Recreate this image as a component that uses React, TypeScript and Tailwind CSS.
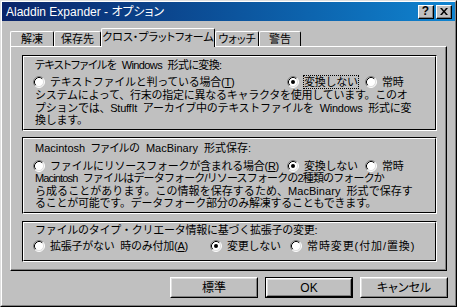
import React from 'react';

const font = "font-['Liberation_Sans','Noto_Sans_CJK_JP',sans-serif]";
const palt = "[font-feature-settings:'palt']";

const Radio: React.FC<{ checked?: boolean }> = ({ checked }) => (
  <svg width="12" height="12" viewBox="0 0 12 12" className="shrink-0">
    <circle cx="6" cy="6" r="5" fill="#fff" />
    <path d="M2.11 9.89A5.5 5.5 0 0 1 9.89 2.11" stroke="#808080" fill="none" />
    <path d="M9.89 2.11A5.5 5.5 0 0 1 2.11 9.89" stroke="#fff" fill="none" />
    <path d="M2.82 9.18A4.5 4.5 0 0 1 9.18 2.82" stroke="#000" fill="none" />
    <path d="M9.18 2.82A4.5 4.5 0 0 1 2.82 9.18" stroke="#dfdfdf" fill="none" />
    {checked && <circle cx="6" cy="6" r="2" fill="#000" />}
  </svg>
);

const Option: React.FC<{ checked?: boolean; focus?: boolean; className?: string; children: React.ReactNode }> = ({
  checked,
  focus,
  className = '',
  children,
}) => (
  <div className={`flex items-center gap-[5px] shrink-0 ${className}`}>
    <Radio checked={checked} />
    <span className={`whitespace-nowrap leading-[12px] ${focus ? 'outline outline-1 outline-dotted outline-black' : ''}`}>
      {children}
    </span>
  </div>
);

// etched frame, dark on top/left and white on bottom/right
const GroupBox: React.FC<{ className: string; children: React.ReactNode }> = ({ className, children }) => (
  <div className={`w-[415px] border border-t-black border-l-black border-r-white border-b-white ${className}`}>
    <div className="h-full border border-t-white border-l-white border-r-black border-b-black pl-[9px]">
      {children}
    </div>
  </div>
);

const Tab: React.FC<{ w: string; active?: boolean; children: React.ReactNode }> = ({ w, active, children }) => (
  <div
    className={`${w} flex justify-center border-l border-t border-white border-r border-r-black rounded-t-[2px] bg-[#c0c0c0] text-[11px] tracking-normal ${palt} ${
      active ? 'h-[19px] -mb-px relative z-10 pt-[2px]' : 'h-[15px] pt-[1px]'
    }`}
  >
    <span className="leading-[12px] whitespace-nowrap">{children}</span>
  </div>
);

const Button: React.FC<{ isDefault?: boolean; children: React.ReactNode }> = ({ isDefault, children }) => (
  <div className={`w-[88px] h-[21px] ${isDefault ? 'border border-black' : ''}`}>
    <div className="h-full border border-t-white border-l-white border-r-black border-b-black">
      <div className="h-full flex items-center justify-center border border-t-[#dfdfdf] border-l-[#dfdfdf] border-r-[#808080] border-b-[#808080]">
        <span className={`leading-[12px] text-[12px] tracking-normal ${palt}`}>{children}</span>
      </div>
    </div>
  </div>
);

const u = (c: string) => <span className="underline underline-offset-1">{c}</span>;

export default function App() {
  return (
    <div className={`w-[457px] h-[307px] bg-[#c0c0c0] text-black text-[11px] tracking-[-0.25px] [word-spacing:3px] ${font} border border-t-[#dfdfdf] border-l-[#dfdfdf] border-r-black border-b-black`}>
      <div className="h-full border border-t-white border-l-white border-r-[#808080] border-b-[#808080] flex flex-col">
        {/* title bar */}
        <div className="h-[19px] bg-linear-to-r from-[#0a246a] to-[#1084d0] flex items-center pl-[4px] pr-[3px]">
          <span className={`text-white text-[12px] leading-[12px] whitespace-nowrap [word-spacing:0px] tracking-normal ${palt}`}>
            Aladdin Expander - オプション
          </span>
          <div className="ml-auto flex gap-[2px]">
            {['?', 'x'].map((k) => (
              <div key={k} className="w-[16px] h-[14px] bg-[#c0c0c0] border border-t-white border-l-white border-r-black border-b-black">
                <div className="h-full flex items-center justify-center border-r border-b border-[#808080]">
                  {k === '?' ? (
                    <span className="font-bold text-[12px] leading-[10px] tracking-normal">?</span>
                  ) : (
                    <svg width="8" height="7" viewBox="0 0 8 7">
                      <path d="M0 0h2l2 2.5L6 0h2L5 3.5 8 7H6L4 4.5 2 7H0l3-3.5z" fill="#000" />
                    </svg>
                  )}
                </div>
              </div>
            ))}
          </div>
        </div>

        {/* tabs */}
        <div className="mt-[7px] pl-[8px] flex items-end h-[18px]">
          <Tab w="w-[44px]">解凍</Tab>
          <Tab w="w-[47px]">保存先</Tab>
          <Tab w="w-[114px]" active>
            クロス・プラットフォーム
          </Tab>
          <Tab w="w-[44px]">ウォッチ</Tab>
          <Tab w="w-[42px]">警告</Tab>
        </div>

        {/* panel */}
        <div className="ml-[8px] w-[437px] h-[225px] border border-t-white border-l-white border-r-black border-b-black">
          <div className="h-full border-r border-b border-[#808080] pl-[11px] pt-[8px]">
            <GroupBox className="h-[76px]">
              <div className={`pt-[2px] pl-[2px] leading-[12px] tracking-[-0.6px] ${palt}`}>テキストファイルを Windows 形式に変換:</div>
              <div className="mt-[5px] flex">
                <Option className="w-[254px]">テキストファイルと判っている場合({u('T')})</Option>
                <Option className="w-[78px]" checked focus>
                  変換しない
                </Option>
                <Option>常時</Option>
              </div>
              <div className="mt-[1px] pl-[2px] leading-[12.5px] whitespace-nowrap">
                <div>システムによって、行末の指定に異なるキャラクタを使用しています。このオ</div>
                <div>プションでは、StuffIt アーカイブ中のテキストファイルを Windows 形式に変</div>
                <div>換します。</div>
              </div>
            </GroupBox>

            <GroupBox className="h-[77px] mt-[6px]">
              <div className={`pt-[3px] pl-[2px] leading-[12px] tracking-normal ${palt}`}>Macintosh ファイルの MacBinary 形式保存:</div>
              <div className="mt-[6px] flex">
                <Option className="w-[254px]">ファイルにリソースフォークが含まれる場合({u('R')})</Option>
                <Option className="w-[78px]" checked>
                  変換しない
                </Option>
                <Option>常時</Option>
              </div>
              <div className="mt-[0px] pl-[2px] leading-[12.5px] whitespace-nowrap">
                <div className="tracking-[-0.85px]">Macintosh ファイルはデータフォーク/リソースフォークの2種類のフォークか</div>
                <div className="tracking-[0.05px]">ら成ることがあります。この情報を保存するため、MacBinary 形式で保存す</div>
                <div>ることが可能です。データフォーク部分のみ解凍することもできます。</div>
              </div>
            </GroupBox>

            <GroupBox className="h-[41px] mt-[7px]">
              <div className="pt-[1px] pl-[2px] leading-[12px]">ファイルのタイプ・クリエータ情報に基づく拡張子の変更:</div>
              <div className="mt-[4px] flex">
                <Option className="w-[177px]">拡張子がない 時のみ付加({u('A')})</Option>
                <Option className="w-[80px]" checked>
                  変更しない
                </Option>
                <Option className="tracking-[0.9px]">常時変更(付加/置換)</Option>
              </div>
            </GroupBox>
          </div>
        </div>

        {/* buttons */}
        <div className="mt-[6px] flex justify-end gap-[7px] pr-[7px]">
          <Button>標準</Button>
          <Button isDefault>OK</Button>
          <Button>キャンセル</Button>
        </div>
      </div>
    </div>
  );
}
